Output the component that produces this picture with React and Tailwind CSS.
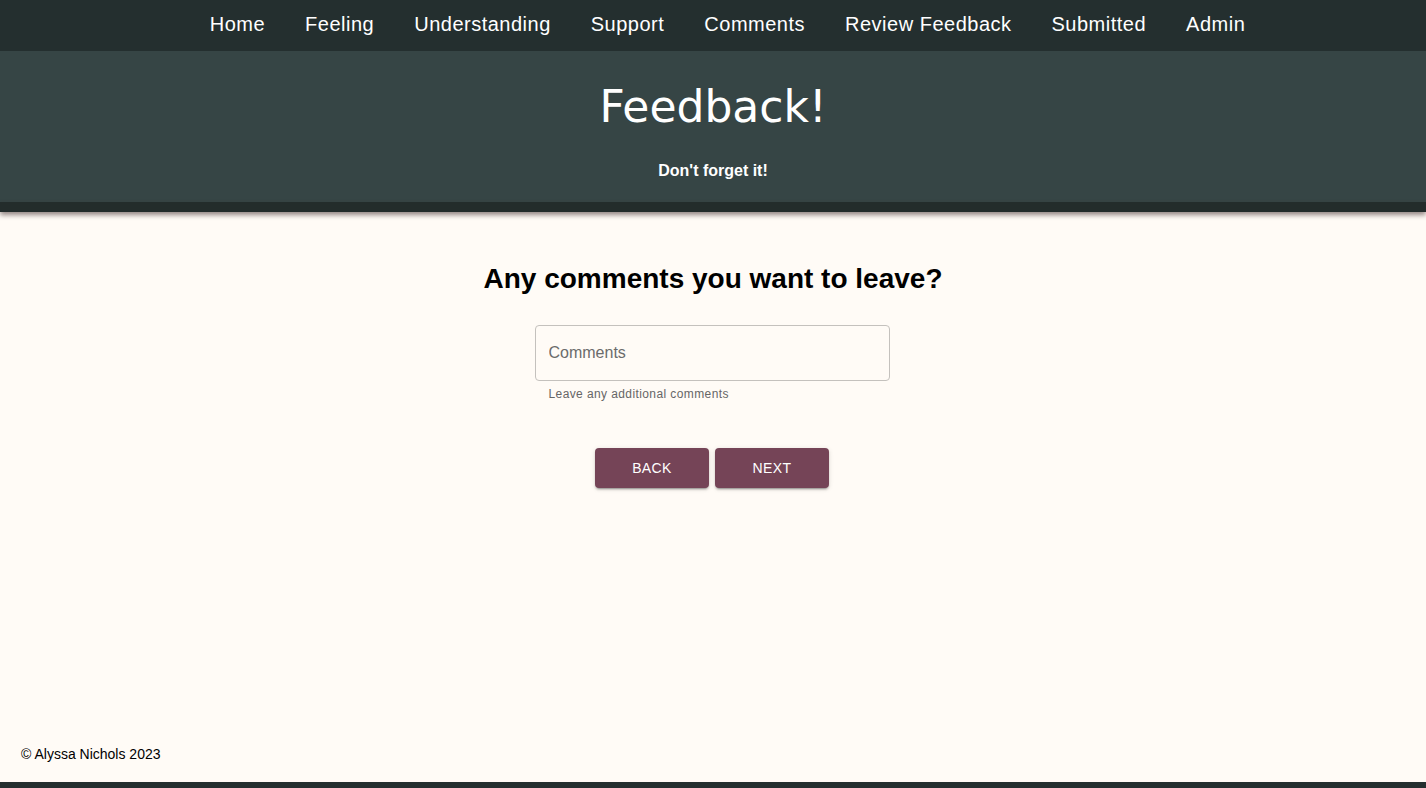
import React from 'react';

const links = ['Home', 'Feeling', 'Understanding', 'Support', 'Comments', 'Review Feedback', 'Submitted', 'Admin'];

export default function App() {
  return (
    <div className="min-h-screen flex flex-col bg-[#fffbf6] font-['Liberation_Sans',Arial,sans-serif]">
      <nav className="h-[51px] bg-[#242f2f] flex items-center justify-center pl-[29px]">
        {links.map((l) => (
          <a key={l} href="#" className="px-5 text-[20px] tracking-[0.5px] text-white leading-none pb-[3px]">{l}</a>
        ))}
      </nav>

      <header className="bg-[#364545] text-white text-center pt-[28px] h-[151px]">
        <h1 className="font-['DejaVu_Sans',Verdana,sans-serif] text-[44px] leading-[56px]">Feedback!</h1>
        <p className="mt-[24px] text-[16px] font-bold">Don't forget it!</p>
      </header>
      <div className="h-[10px] bg-[#232c2b] shadow-[0_3px_5px_rgba(60,40,40,0.55)]"></div>

      <main className="flex-1 flex flex-col items-center pt-[46px]">
        <h2 className="text-[28px] font-bold text-black">Any comments you want to leave?</h2>

        <div className="mt-[25px] w-[355px] -translate-x-[1px]">
          <input
            placeholder="Comments"
            className="w-full h-[56px] px-[13px] rounded-[4px] border border-[#c4c1bd] bg-transparent text-[16px] text-[#333] placeholder:text-[#6b6b6b] outline-none"
          />
          <p className="mt-[4px] ml-[14px] text-[12px] tracking-[0.4px] text-[#666]">Leave any additional comments</p>
        </div>

        <div className="mt-[45px] flex gap-[6px] -translate-x-[1px]">
          <button className="w-[114px] h-[40px] rounded-[4px] bg-[#754457] text-white text-[14px] tracking-[0.4px] uppercase shadow-[0_3px_1px_-2px_rgba(0,0,0,0.2),0_2px_2px_0_rgba(0,0,0,0.14),0_1px_5px_0_rgba(0,0,0,0.12)]">Back</button>
          <button className="w-[114px] h-[40px] rounded-[4px] bg-[#754457] text-white text-[14px] tracking-[0.4px] uppercase shadow-[0_3px_1px_-2px_rgba(0,0,0,0.2),0_2px_2px_0_rgba(0,0,0,0.14),0_1px_5px_0_rgba(0,0,0,0.12)]">Next</button>
        </div>
      </main>

      <footer>
        <p className="px-[21px] pb-[17px] text-[14px] text-black">© Alyssa Nichols 2023</p>
        <div className="h-[6px] bg-[#242f2f]"></div>
      </footer>
    </div>
  );
}
